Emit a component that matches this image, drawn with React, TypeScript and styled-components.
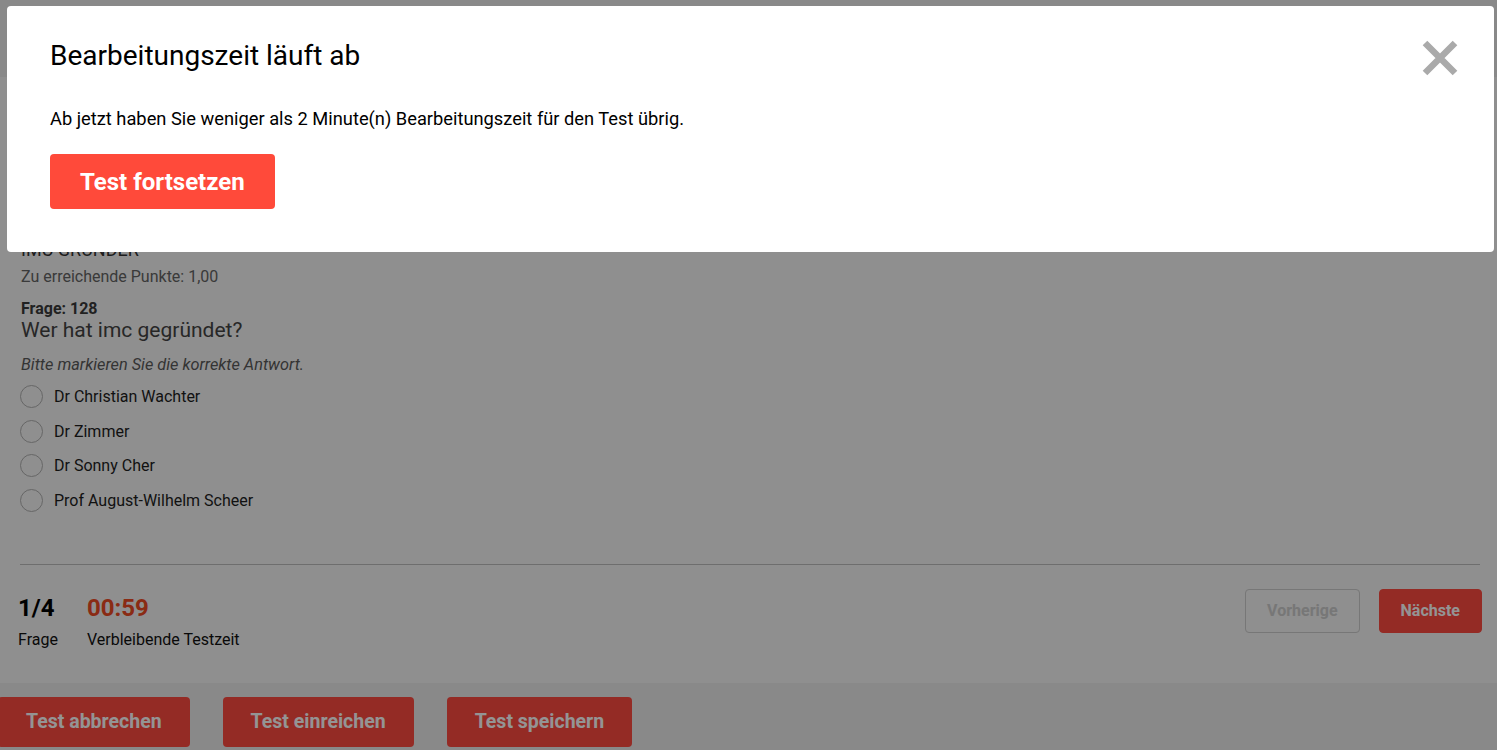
import React from "react";
import styled, { createGlobalStyle } from "styled-components";

const GlobalStyle = createGlobalStyle`
  html, body { margin: 0; padding: 0; }
  body {
    font-family: Roboto, "Noto Sans", Arial, sans-serif;
    background: #f6f6f6;
    overflow: hidden;
  }
  * { box-sizing: border-box; }
`;

const Page = styled.div`
  min-height: 100vh;
  display: flex;
  flex-direction: column;
  background: #f6f6f6;
`;

const Header = styled.header`
  height: 77px;
  background: #ececec;
`;

const Main = styled.main`
  flex: 1;
  display: flex;
  flex-direction: column;
  padding-top: 161px;
`;

const QuestionBlock = styled.section`
  padding: 0 17px 0 21px;
  display: flex;
  flex-direction: column;
`;

const Topic = styled.h2`
  margin: 0;
  font-size: 18px;
  line-height: 24px;
  font-weight: 400;
  text-transform: uppercase;
  color: #333;
`;

const Points = styled.div`
  margin-top: 5px;
  font-size: 16px;
  line-height: 20px;
  color: #646464;
`;

const QuestionNo = styled.div`
  margin-top: 13px;
  font-size: 16px;
  line-height: 18px;
  font-weight: 700;
  color: #3a3a3a;
`;

const QuestionText = styled.h3`
  margin: 0;
  font-size: 21px;
  line-height: 24px;
  font-weight: 400;
  color: #444;
`;

const Hint = styled.p`
  margin: 13px 0 0;
  font-size: 16.3px;
  line-height: 20px;
  font-style: italic;
  color: #5a5a5a;
`;

const Options = styled.div`
  margin: 4px 0 0 -1px;
  display: flex;
  flex-direction: column;
`;

const Option = styled.label`
  height: 34.7px;
  display: flex;
  align-items: center;
  gap: 11px;
  font-size: 16px;
  color: #1e1e1e;
`;

const Radio = styled.span`
  width: 23px;
  height: 23px;
  border-radius: 50%;
  border: 1px solid #b0b0b0;
  background: #f6f6f6;
  flex: none;
`;

const Divider = styled.hr`
  margin: 46px 17px 0 20px;
  border: 0;
  border-top: 1px solid #bdbdbd;
`;

const StatusRow = styled.div`
  display: flex;
  align-items: flex-start;
  justify-content: space-between;
  padding: 24px 15px 0 18px;
  height: 118px;
`;

const Stats = styled.div`
  display: flex;
  gap: 29px;
  padding-top: 5px;
`;

const Stat = styled.div`
  display: flex;
  flex-direction: column;
`;

const StatValue = styled.div<{ $accent?: boolean }>`
  font-size: 24px;
  line-height: 28px;
  font-weight: 700;
  color: ${(p) => (p.$accent ? "#ee4a24" : "#000")};
`;

const StatLabel = styled.div`
  margin-top: 8px;
  font-size: 16px;
  line-height: 20px;
  color: #111;
`;

const NavButtons = styled.div`
  display: flex;
  gap: 19px;
`;

const NavButton = styled.button<{ $primary?: boolean }>`
  height: 44px;
  padding: 0 21px;
  border-radius: 4px;
  font-family: inherit;
  font-size: 16px;
  font-weight: 700;
  border: 1px solid ${(p) => (p.$primary ? "#ff4a40" : "#cdcdcd")};
  background: ${(p) => (p.$primary ? "#ff4a40" : "transparent")};
  color: ${(p) => (p.$primary ? "#ffffff" : "#cdcdcd")};
`;

const ActionBar = styled.footer`
  background: #ececec;
  padding: 14px 0 4px;
  margin-left: -2px;
  display: flex;
  gap: 33px;
`;

const ActionButton = styled.button`
  height: 50px;
  padding: 0 28px;
  border: 0;
  border-radius: 4px;
  background: #ff4a40;
  color: #fff;
  font-family: inherit;
  font-size: 19.5px;
  font-weight: 700;
`;

const Overlay = styled.div`
  position: fixed;
  inset: 0;
  background: rgba(0, 0, 0, 0.42);
  display: flex;
  align-items: flex-start;
`;

const Modal = styled.div`
  position: relative;
  margin: 6px 0 0 7px;
  width: 1487px;
  height: 246px;
  background: #fff;
  border-radius: 4px;
  padding: 33px 43px 0;
  display: flex;
  flex-direction: column;
  align-items: flex-start;
`;

const ModalTitle = styled.h1`
  margin: 0;
  font-size: 28px;
  line-height: 34px;
  font-weight: 400;
  color: #000;
`;

const ModalText = styled.p`
  margin: 35px 0 0;
  font-size: 18.3px;
  line-height: 22px;
  color: #000;
`;

const ModalButton = styled.button`
  margin-top: 24px;
  height: 55px;
  padding: 0 30px;
  border: 0;
  border-radius: 4px;
  background: #ff4a3a;
  color: #fff;
  font-family: inherit;
  font-size: 24px;
  font-weight: 700;
`;

const CloseButton = styled.button`
  position: absolute;
  top: 34px;
  right: 36px;
  width: 36px;
  height: 36px;
  padding: 0;
  border: 0;
  background: transparent;
  display: flex;
`;

const answers = [
  "Dr Christian Wachter",
  "Dr Zimmer",
  "Dr Sonny Cher",
  "Prof August-Wilhelm Scheer",
];

export default function App() {
  return (
    <>
      <GlobalStyle />
      <Page>
        <Header />
        <Main>
          <QuestionBlock>
            <Topic>imc Gründer</Topic>
            <Points>Zu erreichende Punkte: 1,00</Points>
            <QuestionNo>Frage: 128</QuestionNo>
            <QuestionText>Wer hat imc gegründet?</QuestionText>
            <Hint>Bitte markieren Sie die korrekte Antwort.</Hint>
            <Options>
              {answers.map((a) => (
                <Option key={a}>
                  <Radio />
                  {a}
                </Option>
              ))}
            </Options>
          </QuestionBlock>
          <Divider />
          <StatusRow>
            <Stats>
              <Stat>
                <StatValue>1/4</StatValue>
                <StatLabel>Frage</StatLabel>
              </Stat>
              <Stat>
                <StatValue $accent>00:59</StatValue>
                <StatLabel>Verbleibende Testzeit</StatLabel>
              </Stat>
            </Stats>
            <NavButtons>
              <NavButton>Vorherige</NavButton>
              <NavButton $primary>Nächste</NavButton>
            </NavButtons>
          </StatusRow>
        </Main>
        <ActionBar>
          <ActionButton>Test abbrechen</ActionButton>
          <ActionButton>Test einreichen</ActionButton>
          <ActionButton>Test speichern</ActionButton>
        </ActionBar>
      </Page>
      <Overlay>
        <Modal>
          <ModalTitle>Bearbeitungszeit läuft ab</ModalTitle>
          <ModalText>
            Ab jetzt haben Sie weniger als 2 Minute(n) Bearbeitungszeit für den Test übrig.
          </ModalText>
          <ModalButton>Test fortsetzen</ModalButton>
          <CloseButton aria-label="Schließen">
            <svg width="36" height="36" viewBox="0 0 36 36">
              <path d="M3 3 L33 33 M33 3 L3 33" stroke="#aaaaaa" strokeWidth="6.5" />
            </svg>
          </CloseButton>
        </Modal>
      </Overlay>
    </>
  );
}
